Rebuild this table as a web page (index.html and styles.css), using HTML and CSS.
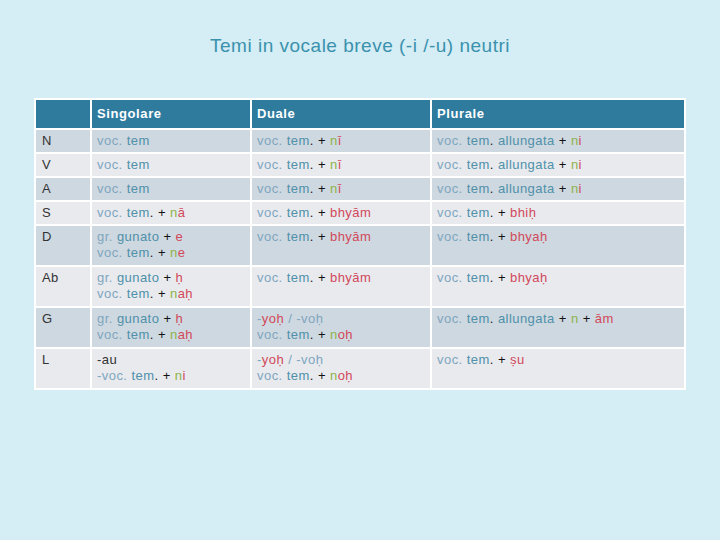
FILE: index.html
```html
<!DOCTYPE html>
<html>
<head>
<meta charset="utf-8">
<link rel="stylesheet" href="styles.css">
</head>
<body>
<h1 class="title">Temi in vocale breve (-i /-u) neutri</h1>
<table class="decl">
  <thead>
    <tr><th class="c1"></th><th class="c2">Singolare</th><th class="c3">Duale</th><th class="c4">Plurale</th></tr>
  </thead>
  <tbody>
    <tr class="dark">
      <td>N</td>
      <td><span class="v">voc.</span> <span class="t">tem</span></td>
      <td><span class="v">voc.</span> <span class="t">tem</span>. <b class="p">+</b> <span class="g">n</span><span class="r">ī</span></td>
      <td><span class="v">voc.</span> <span class="t">tem</span>. <span class="t">allungata</span> <b class="p">+</b> <span class="g">n</span><span class="r">i</span></td>
    </tr>
    <tr class="light">
      <td>V</td>
      <td><span class="v">voc.</span> <span class="t">tem</span></td>
      <td><span class="v">voc.</span> <span class="t">tem</span>. <b class="p">+</b> <span class="g">n</span><span class="r">ī</span></td>
      <td><span class="v">voc.</span> <span class="t">tem</span>. <span class="t">allungata</span> <b class="p">+</b> <span class="g">n</span><span class="r">i</span></td>
    </tr>
    <tr class="dark">
      <td>A</td>
      <td><span class="v">voc.</span> <span class="t">tem</span></td>
      <td><span class="v">voc.</span> <span class="t">tem</span>. <b class="p">+</b> <span class="g">n</span><span class="r">ī</span></td>
      <td><span class="v">voc.</span> <span class="t">tem</span>. <span class="t">allungata</span> <b class="p">+</b> <span class="g">n</span><span class="r">i</span></td>
    </tr>
    <tr class="light">
      <td>S</td>
      <td><span class="v">voc.</span> <span class="t">tem</span>. <b class="p">+</b> <span class="g">n</span><span class="r">ā</span></td>
      <td><span class="v">voc.</span> <span class="t">tem</span>. <b class="p">+</b> <span class="r">bhyām</span></td>
      <td><span class="v">voc.</span> <span class="t">tem</span>. <b class="p">+</b> <span class="r">bhiḥ</span></td>
    </tr>
    <tr class="dark two">
      <td>D</td>
      <td><span class="v">gr.</span> <span class="t">gunato</span> <b class="p">+</b> <span class="r">e</span><br><span class="v">voc.</span> <span class="t">tem</span>. <b class="p">+</b> <span class="g">n</span><span class="r">e</span></td>
      <td><span class="v">voc.</span> <span class="t">tem</span>. <b class="p">+</b> <span class="r">bhyām</span></td>
      <td><span class="v">voc.</span> <span class="t">tem</span>. <b class="p">+</b> <span class="r">bhyaḥ</span></td>
    </tr>
    <tr class="light two">
      <td>Ab</td>
      <td><span class="v">gr.</span> <span class="t">gunato</span> <b class="p">+</b> <span class="r">ḥ</span><br><span class="v">voc.</span> <span class="t">tem</span>. <b class="p">+</b> <span class="g">n</span><span class="r">aḥ</span></td>
      <td><span class="v">voc.</span> <span class="t">tem</span>. <b class="p">+</b> <span class="r">bhyām</span></td>
      <td><span class="v">voc.</span> <span class="t">tem</span>. <b class="p">+</b> <span class="r">bhyaḥ</span></td>
    </tr>
    <tr class="dark two">
      <td>G</td>
      <td><span class="v">gr.</span> <span class="t">gunato</span> <b class="p">+</b> <span class="r">ḥ</span><br><span class="v">voc.</span> <span class="t">tem</span>. <b class="p">+</b> <span class="g">n</span><span class="r">aḥ</span></td>
      <td><span class="v">-</span><span class="r">yoḥ</span> <span class="v">/ -voḥ</span><br><span class="v">voc.</span> <span class="t">tem</span>. <b class="p">+</b> <span class="g">n</span><span class="r">oḥ</span></td>
      <td><span class="v">voc.</span> <span class="t">tem</span>. <span class="t">allungata</span> <b class="p">+</b> <span class="g">n</span> <b class="p">+</b> <span class="r">ām</span></td>
    </tr>
    <tr class="light two">
      <td>L</td>
      <td><span class="k">-au</span><br><span class="v">-voc.</span> <span class="t">tem</span>. <b class="p">+</b> <span class="g">n</span><span class="r">i</span></td>
      <td><span class="v">-</span><span class="r">yoḥ</span> <span class="v">/ -voḥ</span><br><span class="v">voc.</span> <span class="t">tem</span>. <b class="p">+</b> <span class="g">n</span><span class="r">oḥ</span></td>
      <td><span class="v">voc.</span> <span class="t">tem</span>. <b class="p">+</b> <span class="r">ṣu</span></td>
    </tr>
  </tbody>
</table>
</body>
</html>
```
FILE: styles.css
```css
html, body {
  margin: 0;
  padding: 0;
  background: #d5edf5;
  width: 720px;
  height: 540px;
  overflow: hidden;
  font-family: "Liberation Sans", Arial, sans-serif;
}
.title {
  margin: 0;
  padding-top: 34px;
  height: 30px;
  text-align: center;
  font-size: 19px;
  font-weight: normal;
  line-height: 24px;
  letter-spacing: 0.5px;
  color: #3a92ad;
}
.decl {
  margin: 34px 0 0 34px;
  width: 652px;
  border-collapse: separate;
  border-spacing: 2px;
  background: #ffffff;
  font-size: 13px;
  line-height: 16px;
  letter-spacing: 0.45px;
  color: #222;
}
.decl th {
  background: #2e7b9e;
  color: #ffffff;
  font-weight: bold;
  text-align: left;
  height: 28px;
  padding: 0 5px;
  box-sizing: border-box;
  letter-spacing: 0.6px;
}
.c1 { width: 54px; }
.c2 { width: 158px; }
.c3 { width: 178px; }
.decl td {
  vertical-align: top;
  padding: 3px 5px 3px 5px;
  height: 16px;
}
.decl td:first-child { padding-left: 6px; }
.two td { padding-bottom: 4px; }
.decl td:first-child { color: #333; }
.k { color: #333; }
.dark td { background: #ced8e0; }
.light td { background: #e8eaee; }
.v { color: #7fa6bf; }
.t { color: #4f90aa; }
.p { color: #111; font-weight: normal; }
.g { color: #8db24a; }
.r { color: #d2485a; }
```
